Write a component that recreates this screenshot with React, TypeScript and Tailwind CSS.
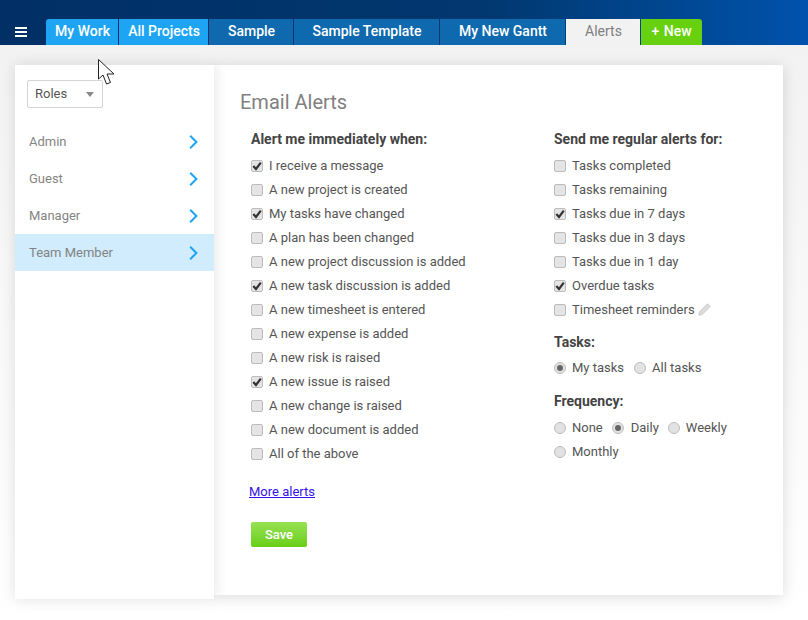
import React from 'react';

const leftAlerts: [string, boolean][] = [
  ['I receive a message', true],
  ['A new project is created', false],
  ['My tasks have changed', true],
  ['A plan has been changed', false],
  ['A new project discussion is added', false],
  ['A new task discussion is added', true],
  ['A new timesheet is entered', false],
  ['A new expense is added', false],
  ['A new risk is raised', false],
  ['A new issue is raised', true],
  ['A new change is raised', false],
  ['A new document is added', false],
  ['All of the above', false],
];

const rightAlerts: [string, boolean][] = [
  ['Tasks completed', false],
  ['Tasks remaining', false],
  ['Tasks due in 7 days', true],
  ['Tasks due in 3 days', false],
  ['Tasks due in 1 day', false],
  ['Overdue tasks', true],
];

const tabs = [
  { name: 'My Work', cls: 'w-[72px] bg-[#1da5f3] text-white rounded-tl-[3px] pl-px' },
  { name: 'All Projects', cls: 'w-[89px] bg-[#1da5f3] text-white pl-px' },
  { name: 'Sample', cls: 'w-[84px] bg-[#0f69ae] text-white pl-px' },
  { name: 'Sample Template', cls: 'w-[145px] bg-[#0f69ae] text-white pl-px' },
  { name: 'My New Gantt', cls: 'w-[125px] bg-[#0f69ae] text-white pl-px' },
];

function Check({ label, checked }: { label: string; checked: boolean }) {
  return (
    <div className="flex items-center h-6">
      <span className="flex items-center justify-center w-3 h-3 rounded-[2px] border border-[#bdbdbd] bg-[#e4e4e4] mr-1.5">
        {checked && (
          <svg width="10" height="10" viewBox="0 0 10 10">
            <path d="M1.3 5 L4 8 L8.8 1.6" fill="none" stroke="#333" strokeWidth="2.2" />
          </svg>
        )}
      </span>
      <span>{label}</span>
    </div>
  );
}

function Radio({ label, checked, cls }: { label: string; checked?: boolean; cls?: string }) {
  return (
    <div className={'flex items-center h-6 ' + (cls || '')}>
      <span className="flex items-center justify-center w-3 h-3 rounded-full border border-[#bdbdbd] bg-[#e2e2e2] mr-1.5">
        {checked && <span className="w-1.5 h-1.5 rounded-full bg-[#666]" />}
      </span>
      <span>{label}</span>
    </div>
  );
}

export default function App() {
  return (
    <div className="w-[808px] h-[620px] overflow-hidden relative bg-gradient-to-b from-[#f1f1f1] to-white font-['Roboto',sans-serif]">
      <div className="flex items-end h-[45px] bg-gradient-to-r from-[#012f66] via-[#01386f] via-60% to-[#0052ac]">
        <div className="flex items-center justify-center w-[46px] h-[26px] pr-[4px]">
          <svg width="12" height="10" viewBox="0 0 12 10">
            <path d="M0 0h12v2H0zM0 4h12v2H0zM0 8h12v2H0z" fill="#fff" />
          </svg>
        </div>
        <div className="flex gap-px text-[14px] font-medium">
          {tabs.map((t) => (
            <div key={t.name} className={'flex items-center justify-center h-[26px] pb-[2px] ' + t.cls}>
              {t.name}
            </div>
          ))}
          <div className="flex items-center justify-center w-[74px] h-[26px] pb-[2px] pl-px bg-[#f2f2f2] text-[#808080] font-normal">
            Alerts
          </div>
          <div className="flex items-center justify-center w-[61px] h-[26px] pb-[2px] bg-[#67d10f] text-white rounded-tr-[3px] [word-spacing:1px]">
            + New
          </div>
        </div>
      </div>

      <div className="flex items-start pl-[15px] pt-5">
        <div className="relative z-10 w-[199px] h-[534px] bg-white shadow-[0_0_14px_rgba(0,0,0,0.12)]">
          <div className="pl-3 pt-[15px] pb-[15px]">
            <div className="flex items-center justify-between w-[76px] h-[28px] pl-[7px] pr-[8px] border border-[#d4d4d4] rounded-[2px] text-[13px] text-[#555]">
              Roles
              <span className="w-0 h-0 border-x-[4px] border-x-transparent border-t-[5px] border-t-[#888]" />
            </div>
          </div>
          {['Admin', 'Guest', 'Manager', 'Team Member'].map((r) => (
            <div
              key={r}
              className={
                'flex items-center justify-between h-[37px] pl-[14px] pr-[16px] text-[13px] text-[#848484] ' +
                (r === 'Team Member' ? 'bg-[#d0ecfd]' : '')
              }
            >
              {r}
              <svg width="9" height="14" viewBox="0 0 9 14">
                <path d="M1.2 0.8 L7.4 7 L1.2 13.2" fill="none" stroke="#1da5f3" strokeWidth="2" />
              </svg>
            </div>
          ))}
        </div>

        <div className="w-[569px] h-[530px] bg-white shadow-[0_2px_14px_rgba(0,0,0,0.14)] pl-[26px] pt-[25px] text-[13px] text-[#555]">
          <h1 className="text-[20px] leading-6 text-[#808080]">Email Alerts</h1>
          <div className="flex mt-[13px]">
            <div className="w-[303px] pl-[11px]">
              <h2 className="text-[14px] font-bold leading-6 text-[#444] mb-[3px]">Alert me immediately when:</h2>
              {leftAlerts.map(([label, checked]) => (
                <Check key={label} label={label} checked={checked} />
              ))}
              <a href="#" className="block mt-[14px] -ml-[2px] leading-6 underline text-[#3311ee]">
                More alerts
              </a>
              <button className="block mt-[18px] w-14 h-[25px] rounded-[2px] bg-gradient-to-b from-[#97e051] to-[#68cf10] text-white font-medium">
                Save
              </button>
            </div>
            <div className="w-[220px] pl-[11px]">
              <h2 className="text-[14px] font-bold leading-6 text-[#444] mb-[3px]">Send me regular alerts for:</h2>
              {rightAlerts.map(([label, checked]) => (
                <Check key={label} label={label} checked={checked} />
              ))}
              <div className="flex items-center">
                <Check label="Timesheet reminders" checked={false} />
                <svg className="ml-[3px] mb-px" width="13" height="13" viewBox="0 0 13 13">
                  <path d="M9.5 0.8 L12.2 3.5 L4 11.7 L0.8 12.2 L1.3 9 Z" fill="#dcdcdc" stroke="#c4c4c4" strokeWidth="0.8" />
                </svg>
              </div>
              <h2 className="text-[14px] font-bold leading-6 text-[#444] mt-[8px] mb-[2px]">Tasks:</h2>
              <div className="flex">
                <Radio label="My tasks" checked cls="mr-[10px]" />
                <Radio label="All tasks" />
              </div>
              <h2 className="text-[14px] font-bold leading-6 text-[#444] mt-[9px] mb-[3px]">Frequency:</h2>
              <div className="flex flex-wrap">
                <Radio label="None" cls="mr-[9px]" />
                <div className="flex items-center h-6 mr-[9px]">
                  <span className="flex items-center justify-center w-3 h-3 rounded-full border border-[#bdbdbd] bg-[#e2e2e2] mr-[7px]">
                    <span className="w-1.5 h-1.5 rounded-full bg-[#666]" />
                  </span>
                  <span>Daily</span>
                </div>
                <Radio label="Weekly" />
                <Radio label="Monthly" />
              </div>
            </div>
          </div>
        </div>
      </div>

      <svg className="absolute z-20 left-[98px] top-[59px]" width="20" height="28" viewBox="0 0 20 28">
        <path d="M0.5 0.5 V20 L5 16 L8.5 25 L12.5 23.5 L9 15 H16 Z" fill="#fff" stroke="#222" strokeWidth="1" />
      </svg>
    </div>
  );
}
